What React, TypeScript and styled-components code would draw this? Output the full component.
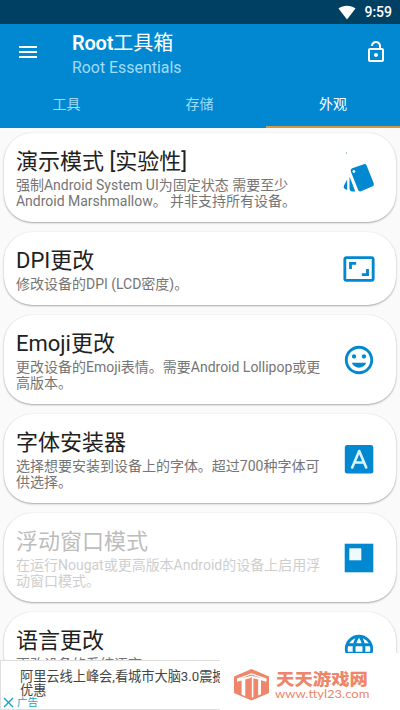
import React from "react";
import styled, { createGlobalStyle } from "styled-components";
import {
  MdAspectRatio,
  MdInsertEmoticon,
  MdLanguage,
  MdMenu,
  MdOutlineLockOpen,
} from "react-icons/md";

const GlobalStyle = createGlobalStyle`
  * { box-sizing: border-box; }
  html, body { margin: 0; padding: 0; overflow: hidden; }
  body { font-family: Roboto, "Noto Sans CJK SC", sans-serif; background: #fafafa; }
  svg { display: block; flex: none; }
`;

const Screen = styled.div`
  position: relative;
  width: 400px;
  height: 710px;
  overflow: hidden;
  display: flex;
  flex-direction: column;
  background: #fafafa;
`;

const StatusBar = styled.div`
  height: 24px;
  flex: none;
  display: flex;
  align-items: center;
  justify-content: flex-end;
  gap: 8px;
  padding-right: 8px;
  background: #004163;
  color: #fff;
  font-size: 14px;
  font-weight: 500;
  line-height: 24px;
`;

const Header = styled.header`
  height: 104px;
  flex: none;
  display: flex;
  flex-direction: column;
  background: #0288d1;
  color: #fff;
`;

const Toolbar = styled.div`
  height: 56px;
  display: flex;
  align-items: center;
  padding: 0 12px 0 16px;
`;

const Heading = styled.div`
  flex: 1;
  margin-left: 32px;
  padding-top: 7px;
`;

const AppTitle = styled.h1`
  margin: 0;
  font-size: 20px;
  font-weight: 600;
  letter-spacing: -0.2px;
  line-height: 25px;
  height: 25px;
  white-space: nowrap;
  span { font-weight: 400; letter-spacing: 0; }
`;

const Subtitle = styled.div`
  font-size: 15.9px;
  line-height: 24px;
  color: #9fdcf8;
`;

const Tabs = styled.nav`
  flex: 1;
  display: grid;
  grid-template-columns: 133px 133px 134px;
`;

const Tab = styled.div<{ $active?: boolean }>`
  display: flex;
  align-items: center;
  justify-content: center;
  font-size: 14px;
  color: ${(p) => (p.$active ? "#fff" : "#9fdcf8")};
  border-bottom: 2px solid ${(p) => (p.$active ? "#cd9b47" : "transparent")};
  padding-bottom: 1px;
`;

const List = styled.main`
  flex: 1;
  min-height: 0;
  display: flex;
  flex-direction: column;
  gap: 10px;
  padding: 5px 4px 0;
  overflow: hidden;
`;

const Card = styled.section`
  flex: none;
  display: flex;
  align-items: center;
  justify-content: space-between;
  padding: 14px 20px 13px 12px;
  background: #fff;
  border-radius: 28px;
  box-shadow: 0 1px 2px rgba(0, 0, 0, 0.32), 0 0 1px rgba(0, 0, 0, 0.12);
`;

const CardText = styled.div<{ $disabled?: boolean }>`
  width: 312px;
  color: ${(p) => (p.$disabled ? "#bdbdbd" : "#212121")};
  p { color: ${(p) => (p.$disabled ? "#cecece" : "#757575")}; }
`;

const CardTitle = styled.h2`
  margin: 0 0 1px;
  font-size: 22px;
  font-weight: 400;
  line-height: 29px;
  height: 29px;
  white-space: nowrap;
`;

const CardDescription = styled.p`
  margin: 0;
  font-size: 14px;
  line-height: 16px;
  letter-spacing: -0.01px;
  white-space: nowrap;
  span { display: block; height: 16px; }
`;

const CardIcon = styled.div`
  flex: none;
  width: 34px;
  height: 34px;
  margin-top: -1px;
  color: #0288d1;
  svg { overflow: visible; }
`;

const AdBanner = styled.aside`
  position: absolute;
  left: 0;
  top: 660px;
  width: 400px;
  height: 50px;
  padding: 9px 0 0 19px;
  background: #fff;
  border: 1px solid #dedede;
  overflow: hidden;
  color: #444;
  font-size: 13.2px;
  line-height: 14px;
  white-space: nowrap;
`;

const AdLine = styled.div`
  height: 14px;
`;

const AdLabel = styled.div`
  position: absolute;
  left: 2px;
  bottom: -1px;
  display: flex;
  align-items: center;
  gap: 3px;
  height: 16px;
  color: #16a5c4;
  font-size: 10.5px;
  line-height: 11px;
`;

const SiteBadge = styled.div`
  position: absolute;
  left: 220px;
  top: 653px;
  width: 180px;
  height: 57px;
  padding: 16px 0 0 13px;
  display: flex;
  gap: 6px;
  background: #fff;
  color: #ed866b;
`;

const SiteName = styled.div`
  font-family: "Noto Sans CJK SC", sans-serif;
  font-size: 18.4px;
  font-weight: 900;
  line-height: 18px;
  height: 17px;
  white-space: nowrap;
  transform: scaleY(0.86);
`;

const SiteUrl = styled.div`
  width: max-content;
  font-family: Lato, sans-serif;
  font-size: 11.5px;
  line-height: 13px;
  margin: 1px 0 0 -1px;
  transform: scaleX(1.13);
  transform-origin: left center;
`;

const WifiIcon = () => (
  <svg width="18" height="15" viewBox="0 0 18 15">
    <path fill="#fff" d="M.5 3.5C5.5-.3 12.5-.3 17.5 3.5L9 14.5Z" />
  </svg>
);

const CardsIcon = () => (
  <svg width="34" height="34" viewBox="0 0 34 34" fill="#0288d1">
    <path d="M10.2 7.3L21.8 3.2Q23.8 2.6 24.6 4.5L31.8 22.4Q32.5 24.4 30.6 25.2L19 30.2Q17 30.9 16.2 28.9L8.8 10.4Q8.2 8.2 10.2 7.3Z" />
    <circle cx="11.9" cy="10.5" r="1.4" fill="#e6f7ff" />
    <path d="M7.5 15.5L13.3 30.5H10.6Q7.7 30.4 7.5 27.6ZM5.2 18.5V29L3 28Q1 26.9 1.9 24.7Z" />
    <path fill="#26958f" d="M4 -8.5h1v1H4Z" />
  </svg>
);

const FontIcon = () => (
  <svg width="34" height="34" viewBox="0 0 34 34" fill="none">
    <rect x="2.8" y="3" width="28.5" height="28.5" rx="2.5" fill="#0288d1" />
    <path d="M10.2 25.5L17.2 9L24.2 25.5M12.6 20.5H21.8" stroke="#d9f5ff" strokeWidth="2.6" strokeLinecap="round" strokeLinejoin="round" />
  </svg>
);

const WindowIcon = () => (
  <svg width="34" height="34" viewBox="0 0 34 34">
    <path fill="#0288d1" d="M2.7 2.7H31.3V31.3H2.7Z" />
    <path fill="#effaff" d="M7.3 7.3H19.3V19.3H7.3Z" />
  </svg>
);

const CubeLogo = () => (
  <svg width="37" height="32" viewBox="0 0 37 32">
    <path fill="#ed866b" d="M18.5 0L36 7.5V24L18.5 31.5L1 24V7.5Z" />
    <path fill="#fff" d="M4 9.5L18.5 4.2L33.5 9.5V12.8L28 11.3V25.2L25.2 26.4V10.6L20.4 9.3V28L18.8 28.7V7.8L16.9 9.3L12.3 10.6V27.2L8.6 25.6V11.6L4 12.8Z" />
    <path fill="#ed866b" d="M7 9.5L18.5 5.6L30.5 9.4L18.5 6.8Z" />
  </svg>
);

const items: { title: string; lines: string[]; icon: React.ReactNode; disabled?: boolean }[] = [
  {
    title: "演示模式 [实验性]",
    lines: ["强制Android System UI为固定状态 需要至少", "Android Marshmallow。 并非支持所有设备。"],
    icon: <CardsIcon />,
  },
  { title: "DPI更改", lines: ["修改设备的DPI (LCD密度)。"], icon: <MdAspectRatio size={34} /> },
  {
    title: "Emoji更改",
    lines: ["更改设备的Emoji表情。需要Android Lollipop或更", "高版本。"],
    icon: <MdInsertEmoticon size={34} />,
  },
  {
    title: "字体安装器",
    lines: ["选择想要安装到设备上的字体。超过700种字体可", "供选择。"],
    icon: <FontIcon />,
  },
  {
    title: "浮动窗口模式",
    lines: ["在运行Nougat或更高版本Android的设备上启用浮", "动窗口模式。"],
    icon: <WindowIcon />,
    disabled: true,
  },
  { title: "语言更改", lines: ["更改设备的系统语言。"], icon: <MdLanguage size={34} /> },
];

export default function App() {
  return (
    <Screen>
      <GlobalStyle />
      <StatusBar>
        <WifiIcon />
        <span>9:59</span>
      </StatusBar>
      <Header>
        <Toolbar>
          <MdMenu size={24} />
          <Heading>
            <AppTitle>Root<span>工具箱</span></AppTitle>
            <Subtitle>Root Essentials</Subtitle>
          </Heading>
          <MdOutlineLockOpen size={24} />
        </Toolbar>
        <Tabs>
          <Tab>工具</Tab>
          <Tab>存储</Tab>
          <Tab $active>外观</Tab>
        </Tabs>
      </Header>
      <List>
        {items.map((item) => (
          <Card key={item.title}>
            <CardText $disabled={item.disabled}>
              <CardTitle>{item.title}</CardTitle>
              <CardDescription>
                {item.lines.map((line) => (
                  <span key={line}>{line}</span>
                ))}
              </CardDescription>
            </CardText>
            <CardIcon>{item.icon}</CardIcon>
          </Card>
        ))}
      </List>
      <AdBanner>
        <AdLine>阿里云线上峰会,看城市大脑3.0震撼</AdLine>
        <AdLine>优惠</AdLine>
        <AdLabel>
          <svg width="11" height="11" viewBox="0 0 11 11">
            <path d="M1 1L10 10M10 1L1 10" stroke="#16a5c4" strokeWidth="1.4" />
          </svg>
          广告
        </AdLabel>
      </AdBanner>
      <SiteBadge>
        <CubeLogo />
        <div>
          <SiteName>天天游戏网</SiteName>
          <SiteUrl>www.ttyl23.com</SiteUrl>
        </div>
      </SiteBadge>
    </Screen>
  );
}
